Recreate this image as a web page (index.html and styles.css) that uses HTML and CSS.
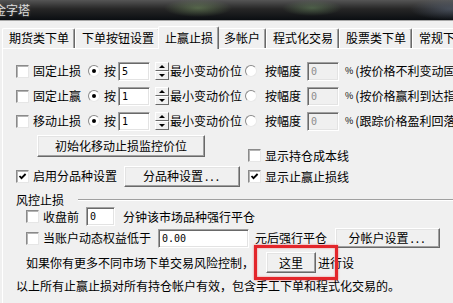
FILE: index.html
```html
<!DOCTYPE html>
<html lang="zh-CN">
<head>
    <meta charset="UTF-8">
    <meta name="viewport" content="width=device-width, initial-scale=1.0">
    <title>止赢止损</title>
    <link rel="stylesheet" href="styles.css">
</head>
<body>
    <header class="titlebar">
        <span class="title">金字塔</span>
    </header>

    <nav class="tabs">
        <span class="tab">期货类下单</span>
        <span class="tab">下单按钮设置</span>
        <span class="tab active">止赢止损</span>
        <span class="tab">多帐户</span>
        <span class="tab">程式化交易</span>
        <span class="tab">股票类下单</span>
        <span class="tab">常规下单</span>
    </nav>

    <main class="panel">
        <!-- 固定止损 / 固定止赢 / 移动止损 -->
        <div class="row stop-row">
            <span class="cb"></span><span class="name">固定止损</span>
            <span class="radio on"></span><span class="by">按</span>
            <span class="field pts">5</span>
            <span class="spin"><i class="up"></i><i class="down"></i></span>
            <span class="min">最小变动价位</span>
            <span class="radio"></span><span class="by-pct">按幅度</span>
            <span class="field pct-box disabled">0</span>
            <span class="pct">%</span>
            <span class="note">(按价格不利变动固定点位止损)</span>
        </div>
        <div class="row stop-row">
            <span class="cb"></span><span class="name">固定止赢</span>
            <span class="radio on"></span><span class="by">按</span>
            <span class="field pts">1</span>
            <span class="spin"><i class="up"></i><i class="down"></i></span>
            <span class="min">最小变动价位</span>
            <span class="radio"></span><span class="by-pct">按幅度</span>
            <span class="field pct-box disabled">0</span>
            <span class="pct">%</span>
            <span class="note">(按价格赢利到达指定点位止赢)</span>
        </div>
        <div class="row stop-row">
            <span class="cb"></span><span class="name">移动止损</span>
            <span class="radio on"></span><span class="by">按</span>
            <span class="field pts">1</span>
            <span class="spin"><i class="up"></i><i class="down"></i></span>
            <span class="min">最小变动价位</span>
            <span class="radio"></span><span class="by-pct">按幅度</span>
            <span class="field pct-box disabled">0</span>
            <span class="pct">%</span>
            <span class="note">(跟踪价格盈利回落点位止损)</span>
        </div>

        <div class="mid">
            <div class="mid-left">
                <span class="btn init-btn">初始化移动止损监控价位</span>
                <div class="row split-row">
                    <span class="cb checked"><svg viewBox="0 0 11 11"><path d="M2.5 5 L4.5 7.2 L8.6 3"/></svg></span>
                    <span class="name">启用分品种设置</span>
                    <span class="btn split-btn">分品种设置<span class="dots">...</span></span>
                </div>
            </div>
            <div class="mid-right">
                <div class="row check-row">
                    <span class="cb"></span><span class="name">显示持仓成本线</span>
                </div>
                <div class="row check-row">
                    <span class="cb checked"><svg viewBox="0 0 11 11"><path d="M2.5 5 L4.5 7.2 L8.6 3"/></svg></span>
                    <span class="name">显示止赢止损线</span>
                </div>
            </div>
        </div>

        <!-- 风控止损 -->
        <div class="group-title">
            <span>风控止损</span><span class="line"></span>
        </div>
        <div class="row risk-row close-row">
            <span class="cb"></span><span class="name">收盘前</span>
            <span class="field min-box">0</span>
            <span class="after">分钟该市场品种强行平仓</span>
        </div>
        <div class="row risk-row equity-row">
            <span class="cb"></span><span class="name">当账户动态权益低于</span>
            <span class="field equity-box">0.00</span>
            <span class="after">元后强行平仓</span>
            <span class="btn acct-btn">分帐户设置<span class="dots">...</span></span>
        </div>
        <div class="row risk-row more-row">
            <span>如果你有更多不同市场下单交易风险控制，</span>
            <span class="btn here-btn">这里</span>
            <span class="then">进行设</span>
        </div>
        <p class="footnote">以上所有止赢止损对所有持仓帐户有效，包含手工下单和程式化交易的。</p>
    </main>
</body>
</html>
```

FILE: styles.css
```css
* {
    box-sizing: border-box;
}

body {
    margin: 0;
    width: 453px;
    height: 303px;
    overflow: hidden;
    background-color: #f0f0f0;
    font-family: "Noto Sans CJK SC", sans-serif;
    font-size: 12px;
    line-height: 14px;
    color: #000000;
}

/* 标题栏 */
.titlebar {
    height: 21px;
    border-bottom: 1px solid #a8a8a8;
    background:
        radial-gradient(ellipse 34px 9px at 198px 8px, rgba(120, 150, 100, 0.55), transparent),
        radial-gradient(ellipse 30px 8px at 312px 8px, rgba(110, 145, 100, 0.5), transparent),
        radial-gradient(ellipse 40px 11px at 450px 9px, rgba(110, 125, 150, 0.45), transparent),
        linear-gradient(#555555, #262626 45%, #0b0e12);
    white-space: nowrap;
}

.title {
    display: block;
    margin-left: -6px;
    padding-top: 3px;
    color: #dcdcdc;
    font-size: 12px;
    text-shadow: 0 0 3px rgba(255, 255, 255, 0.3);
}

/* 页签 */
.tabs {
    display: flex;
    align-items: flex-end;
    height: 20px;
    margin-top: 7px;
    padding-left: 2px;
    white-space: nowrap;
    position: relative;
    z-index: 1;
}

.tab {
    flex: none;
    height: 20px;
    padding: 0 5px 0 6px;
    line-height: 18px;
    border-top: 1px solid #ffffff;
    border-left: 1px solid #ffffff;
    border-right: 1px solid #696969;
    border-radius: 2px 2px 0 0;
    box-shadow: inset -1px 0 0 #a0a0a0;
    background-color: #f0f0f0;
}

.tab.active {
    height: 23px;
    margin: 0 -2px -1px;
    padding-top: 1px;
    line-height: 19px;
    position: relative;
    z-index: 2;
}

/* 面板 */
.panel {
    height: 260px;
    margin-left: 2px;
    padding: 12px 0 0 13px;
    border-top: 1px solid #ffffff;
    border-left: 1px solid #ffffff;
}

.row {
    display: flex;
    align-items: center;
    white-space: nowrap;
}

/* 控件 */
.cb {
    flex: none;
    width: 13px;
    height: 13px;
    background-color: #ffffff;
    border: 1px solid;
    border-color: #8a8a8a #e6e6e6 #e6e6e6 #8a8a8a;
    box-shadow: inset 1px 1px 0 #b4b4b4;
}

.cb svg {
    display: block;
    width: 11px;
    height: 11px;
}

.cb path {
    fill: none;
    stroke: #000000;
    stroke-width: 1.8;
}

.radio {
    flex: none;
    width: 12px;
    height: 12px;
    border-radius: 50%;
    background-color: #ffffff;
    border: 1px solid;
    border-color: #8a8a8a #e8e8e8 #e8e8e8 #8a8a8a;
    display: flex;
    align-items: center;
    justify-content: center;
}

.radio.on::after {
    content: "";
    width: 4px;
    height: 4px;
    border-radius: 50%;
    background-color: #000000;
}

.field {
    flex: none;
    height: 19px;
    padding: 2px 0 0 3px;
    background-color: #ffffff;
    border: 1px solid;
    border-color: #a0a0a0 #ffffff #ffffff #a0a0a0;
    box-shadow: inset 1px 1px 0 #696969, inset -1px -1px 0 #e3e3e3;
    font-family: "DejaVu Sans Mono", monospace;
    font-size: 10px;
    line-height: 14px;
}

.field.disabled {
    background-color: #f0f0f0;
    color: #8c8c8c;
}

.spin {
    flex: none;
    display: flex;
    flex-direction: column;
    width: 14px;
    height: 18px;
}

.spin i {
    flex: 1;
    display: flex;
    align-items: center;
    justify-content: center;
    border: 1px solid;
    border-color: #ffffff #696969 #696969 #ffffff;
    background-color: #f0f0f0;
}

.spin .up::after {
    content: "";
    border-left: 3px solid transparent;
    border-right: 3px solid transparent;
    border-bottom: 3px solid #000000;
}

.spin .down::after {
    content: "";
    border-left: 3px solid transparent;
    border-right: 3px solid transparent;
    border-top: 3px solid #000000;
}

.btn {
    flex: none;
    display: flex;
    align-items: center;
    justify-content: center;
    background-color: #f0f0f0;
    border: 1px solid;
    border-color: #ffffff #696969 #696969 #ffffff;
    box-shadow: inset -1px -1px 0 #a0a0a0, inset 1px 1px 0 #e3e3e3;
    white-space: nowrap;
}

.dots {
    letter-spacing: 2px;
    margin-left: 2px;
}

/* 止损三行 */
.stop-row {
    height: 20px;
}

.stop-row + .stop-row {
    margin-top: 5px;
}

.stop-row .name {
    margin: 0 7px 0 4px;
}

.stop-row .by {
    margin: 0 2px 0 4px;
}

.pts {
    width: 32px;
}

.spin {
    margin: 0 1px 0 5px;
}

.min {
    margin-right: 3px;
}

.by-pct {
    margin: 0 6px 0 8px;
}

.pct-box {
    width: 32px;
}

.pct {
    margin-left: 6px;
    font-size: 9px;
}

.note {
    margin-left: 2px;
}

/* 中间部分 */
.mid {
    display: flex;
    margin-top: 4px;
}

.mid-left {
    flex: none;
    width: 232px;
}

.init-btn {
    width: 168px;
    height: 22px;
    margin-left: 21px;
}

.split-row {
    height: 22px;
    margin-top: 8px;
}

.split-row .name,
.check-row .name {
    margin-left: 4px;
}

.split-btn {
    width: 116px;
    height: 21px;
    margin-left: 7px;
}

.mid-right {
    display: flex;
    flex-direction: column;
    gap: 8px;
    padding-top: 14px;
}

.check-row {
    height: 13px;
}

/* 风控止损 */
.group-title {
    display: flex;
    align-items: center;
    height: 14px;
    margin-top: 6px;
}

.group-title .line {
    flex: 1;
    margin-left: 14px;
    border-top: 1px solid #a0a0a0;
    border-bottom: 1px solid #ffffff;
}

.risk-row {
    padding-left: 10px;
}

.risk-row .name {
    margin: 0 7px 0 4px;
}

.close-row {
    height: 19px;
}

.min-box {
    width: 29px;
}

.close-row .after {
    margin-left: 8px;
}

.equity-row {
    height: 20px;
    margin-top: 2px;
}

.equity-box {
    width: 91px;
}

.equity-row .after {
    margin-left: 6px;
}

.acct-btn {
    width: 105px;
    height: 20px;
    margin-left: 8px;
}

.more-row {
    height: 21px;
    margin-top: 4px;
}

.here-btn {
    width: 50px;
    height: 21px;
    margin-left: 12px;
    position: relative;
}

/* 红色标注框 */
.here-btn::after {
    content: "";
    position: absolute;
    left: -13px;
    top: -8px;
    right: -23px;
    bottom: -8px;
    border: 3px solid #e3262b;
    box-shadow: 0 0 2px rgba(227, 38, 43, 0.6), inset 0 0 2px rgba(227, 38, 43, 0.6);
}

.then {
    margin-left: 2px;
}

.footnote {
    margin: 6px 0 0;
    height: 14px;
    white-space: nowrap;
}
```
